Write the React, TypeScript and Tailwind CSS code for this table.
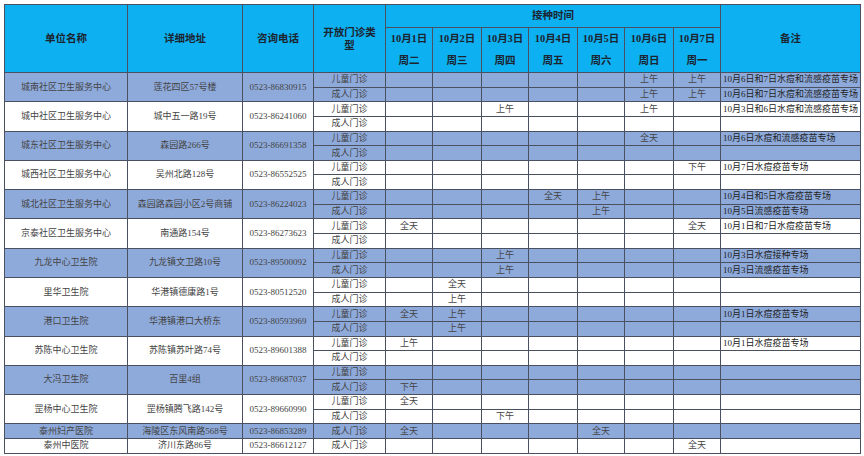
import React from "react";

type Sub = { type: string; days: Record<number, string>; note?: string };
type Unit = { name: string; addr: string; tel: string; subs: Sub[] };

const dates = [
  { d: "10月1日", w: "周二" },
  { d: "10月2日", w: "周三" },
  { d: "10月3日", w: "周四" },
  { d: "10月4日", w: "周五" },
  { d: "10月5日", w: "周六" },
  { d: "10月6日", w: "周日" },
  { d: "10月7日", w: "周一" },
];

const units: Unit[] = [
  {
    name: "城南社区卫生服务中心",
    addr: "莲花四区57号楼",
    tel: "0523-86830915",
    subs: [
      { type: "儿童门诊", days: { 6: "上午", 7: "上午" }, note: "10月6日和7日水痘和流感疫苗专场" },
      { type: "成人门诊", days: { 6: "上午", 7: "上午" }, note: "10月6日和7日水痘和流感疫苗专场" },
    ],
  },
  {
    name: "城中社区卫生服务中心",
    addr: "城中五一路19号",
    tel: "0523-86241060",
    subs: [
      { type: "儿童门诊", days: { 3: "上午", 6: "上午" }, note: "10月3日和6日水痘和流感疫苗专场" },
      { type: "成人门诊", days: {} },
    ],
  },
  {
    name: "城东社区卫生服务中心",
    addr: "森园路266号",
    tel: "0523-86691358",
    subs: [
      { type: "儿童门诊", days: { 6: "全天" }, note: "10月6日水痘和流感疫苗专场" },
      { type: "成人门诊", days: {} },
    ],
  },
  {
    name: "城西社区卫生服务中心",
    addr: "吴州北路128号",
    tel: "0523-86552525",
    subs: [
      { type: "儿童门诊", days: { 7: "下午" }, note: "10月7日水痘疫苗专场" },
      { type: "成人门诊", days: {} },
    ],
  },
  {
    name: "城北社区卫生服务中心",
    addr: "森园路森园小区2号商铺",
    tel: "0523-86224023",
    subs: [
      { type: "儿童门诊", days: { 4: "全天", 5: "上午" }, note: "10月4日和5日水痘疫苗专场" },
      { type: "成人门诊", days: { 5: "上午" }, note: "10月5日流感疫苗专场" },
    ],
  },
  {
    name: "京泰社区卫生服务中心",
    addr: "南通路154号",
    tel: "0523-86273623",
    subs: [
      { type: "儿童门诊", days: { 1: "全天", 7: "全天" }, note: "10月1日和7日水痘疫苗专场" },
      { type: "成人门诊", days: {} },
    ],
  },
  {
    name: "九龙中心卫生院",
    addr: "九龙镇文卫路10号",
    tel: "0523-89500092",
    subs: [
      { type: "儿童门诊", days: { 3: "上午" }, note: "10月3日水痘接种专场" },
      { type: "成人门诊", days: { 3: "上午" }, note: "10月3日流感疫苗专场" },
    ],
  },
  {
    name: "里华卫生院",
    addr: "华港镇德康路1号",
    tel: "0523-80512520",
    subs: [
      { type: "儿童门诊", days: { 2: "全天" } },
      { type: "成人门诊", days: { 2: "上午" } },
    ],
  },
  {
    name: "港口卫生院",
    addr: "华港镇港口大桥东",
    tel: "0523-80593969",
    subs: [
      { type: "儿童门诊", days: { 1: "全天", 2: "上午" }, note: "10月1日水痘疫苗专场" },
      { type: "成人门诊", days: { 2: "上午" } },
    ],
  },
  {
    name: "苏陈中心卫生院",
    addr: "苏陈镇苏叶路74号",
    tel: "0523-89601388",
    subs: [
      { type: "儿童门诊", days: { 1: "上午" }, note: "10月1日水痘疫苗专场" },
      { type: "成人门诊", days: {} },
    ],
  },
  {
    name: "大冯卫生院",
    addr: "百里4组",
    tel: "0523-89687037",
    subs: [
      { type: "儿童门诊", days: {} },
      { type: "成人门诊", days: { 1: "下午" } },
    ],
  },
  {
    name: "罡杨中心卫生院",
    addr: "罡杨镇腾飞路142号",
    tel: "0523-89660990",
    subs: [
      { type: "儿童门诊", days: { 1: "全天" } },
      { type: "成人门诊", days: { 3: "下午" } },
    ],
  },
  {
    name: "泰州妇产医院",
    addr: "海陵区东风南路568号",
    tel: "0523-86853289",
    subs: [{ type: "成人门诊", days: { 1: "全天", 5: "全天" } }],
  },
  {
    name: "泰州中医院",
    addr: "济川东路86号",
    tel: "0523-86612127",
    subs: [{ type: "成人门诊", days: { 7: "全天" } }],
  },
];

const th = "border border-[#4a5060] font-bold text-[#1c2430] p-0 text-center align-middle";
const td = "border border-[#4a5060] p-0 text-center align-middle whitespace-nowrap overflow-hidden";

export default function App() {
  return (
    <div className="bg-white w-[864px] h-[456px] pt-[4px] pl-[4px] font-['Liberation_Serif','Noto_Sans_CJK_SC',serif] text-[#444]">
      <table className="table-fixed border-collapse w-[856px]">
        <colgroup>
          <col className="w-[123px]" />
          <col className="w-[115px]" />
          <col className="w-[71px]" />
          <col className="w-[72px]" />
          <col className="w-[47px]" />
          <col className="w-[49px]" />
          <col className="w-[47px]" />
          <col className="w-[49px]" />
          <col className="w-[47px]" />
          <col className="w-[49px]" />
          <col className="w-[47px]" />
          <col className="w-[140px]" />
        </colgroup>
        <thead className="bg-[#0db0f0]">
          <tr className="h-[23px]">
            <th rowSpan={2} className={`${th} text-[10.5px]`}>单位名称</th>
            <th rowSpan={2} className={`${th} text-[10.5px]`}>详细地址</th>
            <th rowSpan={2} className={`${th} text-[10.5px]`}>咨询电话</th>
            <th rowSpan={2} className={`${th} text-[10.5px] leading-[13px]`}>
              开放门诊类
              <br />型
            </th>
            <th colSpan={7} className={`${th} text-[10.5px]`}>接种时间</th>
            <th rowSpan={2} className={`${th} text-[10.5px]`}>备注</th>
          </tr>
          <tr className="h-[44px]">
            {dates.map((x) => (
              <th key={x.d} className={`${th} text-[10.5px] leading-[22px]`}>
                <div>{x.d}</div>
                <div>{x.w}</div>
              </th>
            ))}
          </tr>
        </thead>
        <tbody className="text-[9px] leading-[11px]">
          {units.map((u, ui) => {
            const bg = ui % 2 === 0 ? "bg-[#8eaadb]" : "bg-white";
            return u.subs.map((s, si) => (
              <tr key={`${u.name}-${si}`} className={`h-[14.65px] ${bg}`}>
                {si === 0 && (
                  <>
                    <td rowSpan={u.subs.length} className={td}>{u.name}</td>
                    <td rowSpan={u.subs.length} className={td}>{u.addr}</td>
                    <td rowSpan={u.subs.length} className={td}>{u.tel}</td>
                  </>
                )}
                <td className={td}>{s.type}</td>
                {[1, 2, 3, 4, 5, 6, 7].map((d) => (
                  <td key={d} className={td}>{s.days[d] ?? ""}</td>
                ))}
                <td className={`${td} text-left pl-[2px] text-[#222]`}>{s.note ?? ""}</td>
              </tr>
            ));
          })}
        </tbody>
      </table>
    </div>
  );
}
